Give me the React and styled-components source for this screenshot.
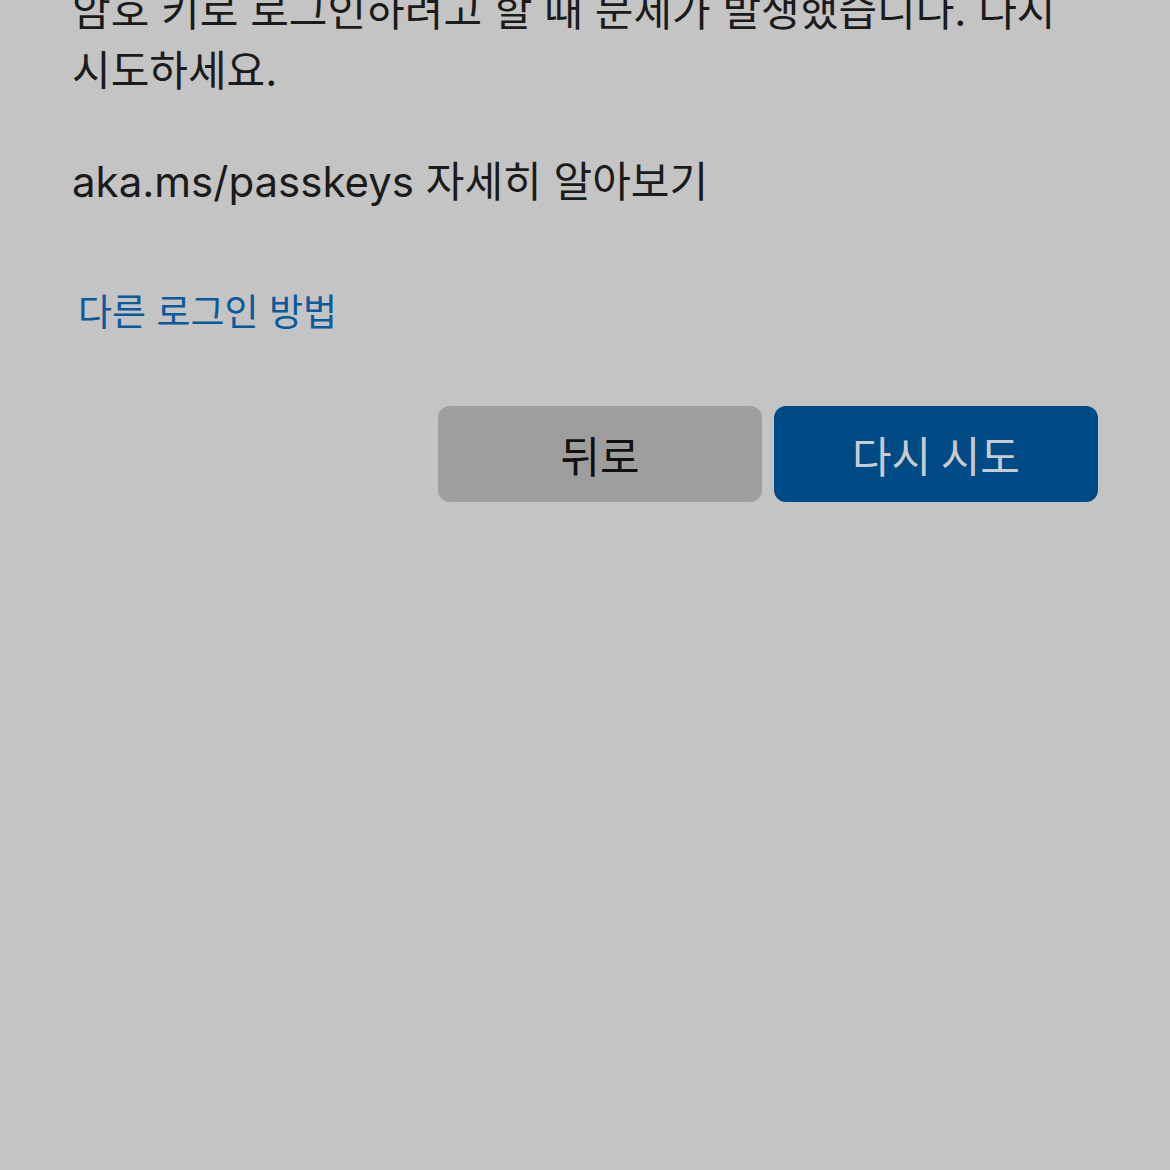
import React from 'react'
import styled, { createGlobalStyle } from 'styled-components'

const GlobalStyle = createGlobalStyle`
    html, body {
        margin: 0;
        padding: 0;
        background: #c4c4c4;
        overflow: hidden;
    }
    body {
        font-family: "Inter", "Noto Sans CJK KR", sans-serif;
        color: #1b1b1b;
    }
`

function App() {
    return (
        <>
            <GlobalStyle />
            <Container>
                <Message>
                    암호 키로 로그인하려고 할 때 문제가 발생했습니다. 다시 시도하세요.
                </Message>
                <LearnMore>aka.ms/passkeys 자세히 알아보기</LearnMore>
                <OtherWays href="#">다른 로그인 방법</OtherWays>
                <Actions>
                    <Button>뒤로</Button>
                    <Button primary>다시 시도</Button>
                </Actions>
            </Container>
        </>
    )
}

export default App

const Container = styled.main`
    width: 1170px;
    height: 1170px;
    box-sizing: border-box;
    padding: 0 72px;
    display: flex;
    flex-direction: column;
`

const Message = styled.p`
    margin: -19px 0 0;
    font-size: 42px;
    line-height: 60px;
    font-weight: 400;
`

const LearnMore = styled.p`
    margin: 51px 0 0;
    font-size: 42px;
    line-height: 60px;
`

const OtherWays = styled.a`
    align-self: flex-start;
    margin: 71px 0 0 6px;
    font-size: 37px;
    line-height: 60px;
    color: #0b5a9a;
    text-decoration: none;
`

const Actions = styled.div`
    margin-top: 63px;
    display: flex;
    justify-content: flex-end;
    gap: 12px;
`

const Button = styled.button`
    width: 324px;
    height: 96px;
    border: none;
    border-radius: 12px;
    font-family: "Noto Sans CJK KR", sans-serif;
    font-size: 43px;
    background: ${p => (p.primary ? '#004a85' : '#9e9e9e')};
    color: ${p => (p.primary ? '#c8ccd2' : '#111')};
    cursor: pointer;
`
